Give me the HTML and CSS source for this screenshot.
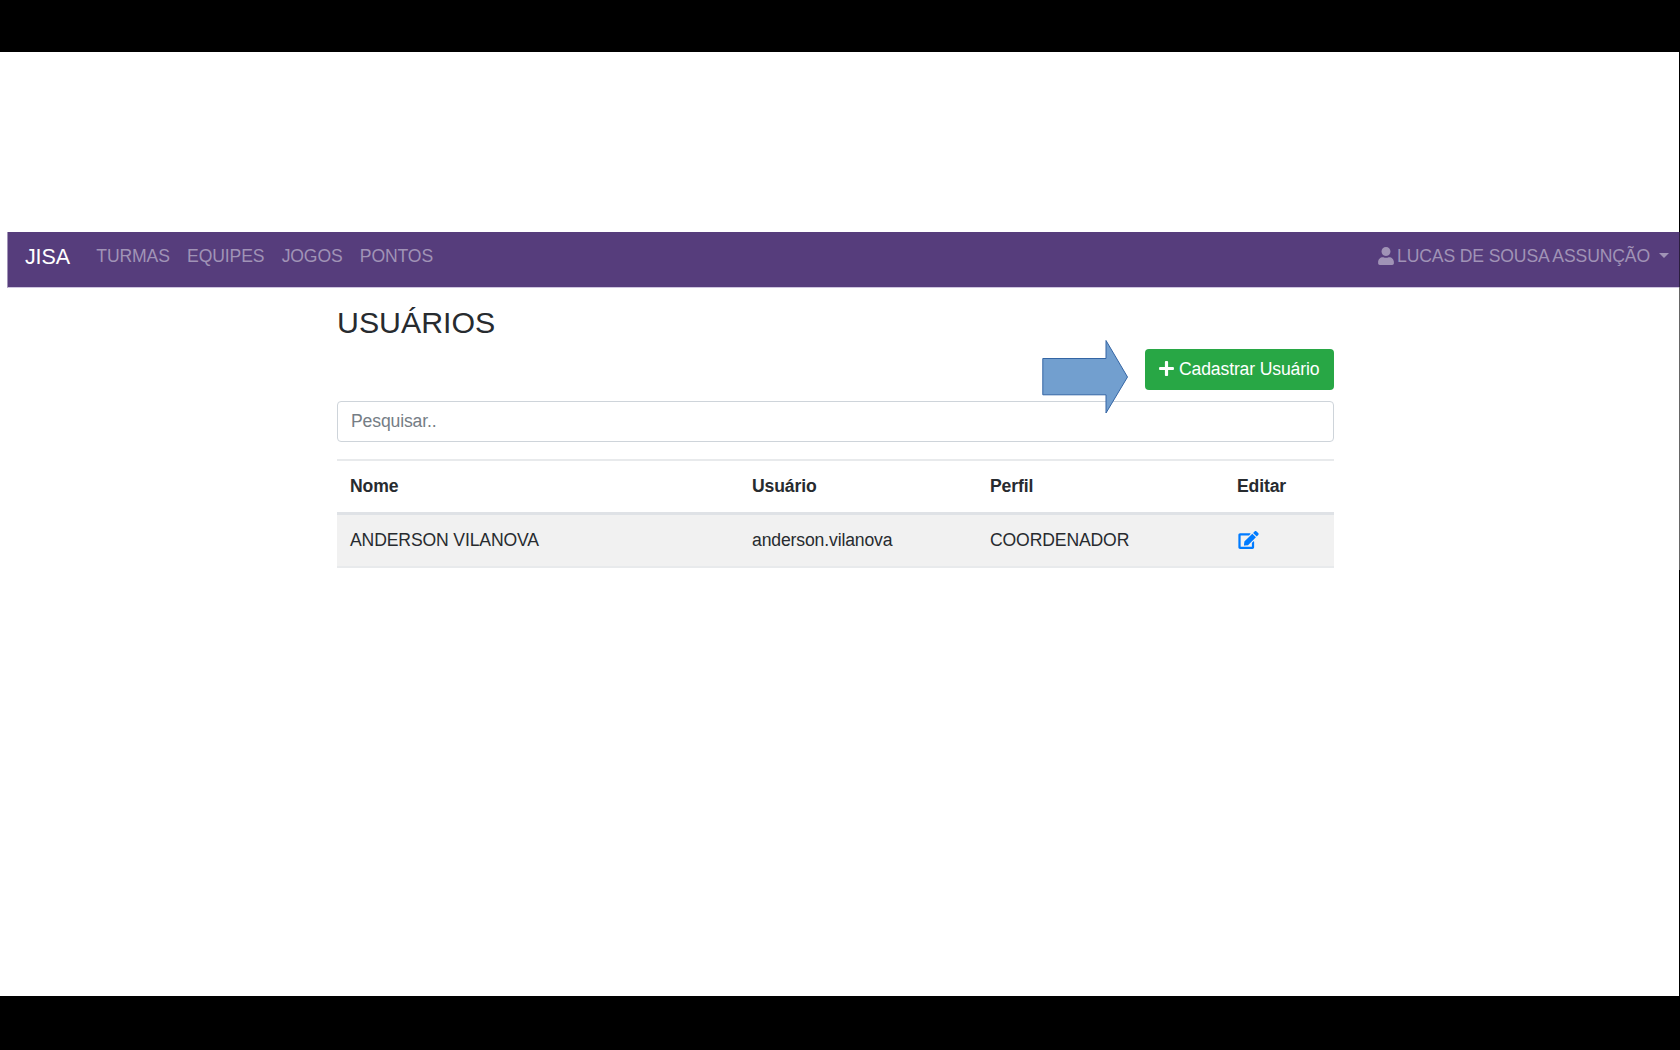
FILE: index.html
```html
<!DOCTYPE html>
<html lang="pt-BR">
<head>
<meta charset="utf-8">
<title>JISA - Usuários</title>
<link rel="stylesheet" href="styles.css">
</head>
<body>
<div class="slide">
  <nav class="navbar">
    <a class="brand">JISA</a>
    <ul class="links">
      <li>TURMAS</li>
      <li>EQUIPES</li>
      <li>JOGOS</li>
      <li>PONTOS</li>
    </ul>
    <div class="account">
      <svg class="user-icon" viewBox="0 0 448 512"><path fill="currentColor" d="M224 256c70.700 0 128-57.300 128-128S294.700 0 224 0 96 57.300 96 128s57.300 128 128 128zm89.600 32h-16.700c-22.200 10.200-46.900 16-72.900 16s-50.600-5.800-72.900-16h-16.700C60.200 288 0 348.200 0 422.400V464c0 26.500 21.500 48 48 48h352c26.500 0 48-21.500 48-48v-41.600c0-74.200-60.200-134.400-134.400-134.400z"/></svg>
      <span>LUCAS DE SOUSA ASSUNÇÃO</span>
      <i class="caret"></i>
    </div>
  </nav>
  <main class="container">
    <h1>USUÁRIOS</h1>
    <div class="actions">
      <svg class="arrow" viewBox="0 0 88 76"><path d="M.8 19.500H64V1.500L85.500 38 64 74V55.800H.8z" fill="#729fcf" stroke="#3465a4"/></svg>
      <button class="btn"><svg class="plus" viewBox="0 0 448 512"><path fill="currentColor" d="M416 208H272V64c0-17.670-14.330-32-32-32h-32c-17.670 0-32 14.330-32 32v144H32c-17.670 0-32 14.330-32 32v32c0 17.670 14.330 32 32 32h144v144c0 17.670 14.330 32 32 32h32c17.670 0 32-14.330 32-32V304h144c17.670 0 32-14.330 32-32v-32c0-17.670-14.330-32-32-32z"/></svg><span>Cadastrar Usuário</span></button>
    </div>
    <input class="search" type="text" placeholder="Pesquisar..">
    <table class="users">
      <colgroup><col class="c-name"><col class="c-user"><col class="c-role"><col></colgroup>
      <thead><tr><th>Nome</th><th>Usuário</th><th>Perfil</th><th>Editar</th></tr></thead>
      <tbody><tr><td>ANDERSON VILANOVA</td><td>anderson.vilanova</td><td>COORDENADOR</td><td><svg class="edit" viewBox="0 0 576 512"><path fill="currentColor" d="M402.600 83.200l90.200 90.200c3.800 3.800 3.800 10 0 13.800L274.400 405.600l-92.800 10.300c-12.400 1.400-22.900-9.100-21.500-21.500l10.300-92.800L388.800 83.200c3.800-3.800 10-3.800 13.800 0zm162-22.900l-48.800-48.800c-15.200-15.200-39.900-15.200-55.200 0l-35.400 35.400c-3.800 3.800-3.800 10 0 13.800l90.200 90.200c3.800 3.800 10 3.800 13.800 0l35.400-35.400c15.200-15.300 15.200-40 0-55.200zM384 346.200V448H64V128h229.800c3.200 0 6.200-1.300 8.500-3.500l40-40c7.600-7.600 2.200-20.500-8.500-20.500H48C21.500 64 0 85.500 0 112v352c0 26.500 21.500 48 48 48h352c26.500 0 48-21.500 48-48V306.200c0-10.700-12.900-16-20.500-8.500l-40 40c-2.200 2.300-3.500 5.300-3.500 8.500z"/></svg></td></tr></tbody>
    </table>
  </main>
  <div class="edge"></div>
</div>
</body>
</html>
```
FILE: styles.css
```css
* { box-sizing: border-box; }

body {
  margin: 0;
  height: 1050px;
  padding: 52px 0 54px;
  background: #000;
  color: #272b2f;
  font: 17.6px/26px "Liberation Sans", Arial, sans-serif;
  letter-spacing: -0.14px;
  overflow: hidden;
}

.slide {
  position: relative;
  height: 944px;
  padding-top: 180px;
  background: #fff;
}

.navbar {
  display: flex;
  align-items: flex-start;
  height: 56px;
  margin-left: 7px;
  padding: 11px 10px 0 17px;
  background: #563d7c;
  border-bottom: 1px solid #cfc5e0;
  border-left: 1px solid #a295b8;
  color: #a093b6;
}

.brand {
  color: #fff;
  font-size: 21.5px;
  line-height: 28px;
}

.links {
  display: flex;
  gap: 17.3px;
  margin: 0 0 0 26.5px;
  padding: 0;
  list-style: none;
}

.account {
  display: flex;
  margin-left: auto;
}

.user-icon {
  width: 16px;
  height: 18px;
  margin: 4px 3px 0 0;
}

.caret {
  margin: 10px 1px 0 9px;
  width: 10px;
  height: 5px;
  background: currentColor;
  clip-path: polygon(0 0, 100% 0, 50% 100%);
}

.container {
  width: 997px;
  margin-left: 337px;
  padding-top: 18px;
}

h1 {
  margin: 0;
  font-size: 30.3px;
  letter-spacing: 0;
  font-weight: 400;
  line-height: 34px;
}

.actions {
  display: flex;
  justify-content: flex-end;
  position: relative;
  margin: 9px 0 11px;
}

.btn {
  display: flex;
  align-items: center;
  width: 189px;
  height: 41px;
  padding: 0 0 2px 14px;
  border: 0;
  border-radius: 4px;
  background: #28a745;
  color: #fff;
  font: inherit;
  letter-spacing: inherit;
  white-space: nowrap;
}

.plus {
  width: 15px;
  height: 17px;
  margin-right: 5px;
}

.arrow {
  position: absolute;
  left: 705px;
  top: -10px;
  width: 88px;
  height: 76px;
}

.search {
  display: block;
  width: 100%;
  height: 41px;
  padding: 0 13px 1px;
  border: 1px solid #ced4da;
  border-radius: 4px;
  background: #fff;
  font: inherit;
  letter-spacing: inherit;
}

.search::placeholder { color: #757d85; opacity: 1; }

.users {
  width: 100%;
  margin-top: 17px;
  border-collapse: separate;
  border-spacing: 0;
  border-bottom: 2px solid #e8eaec;
  table-layout: fixed;
}

.c-name { width: 402px; }
.c-user { width: 238px; }
.c-role { width: 247px; }

.users th,
.users td {
  height: 51px;
  padding: 0 13px;
  text-align: left;
}

.users th {
  height: 56px;
  padding-bottom: 2px;
  border-top: 2px solid #e8eaec;
  border-bottom: 3px solid #dfe2e6;
}

.users td {
  padding-bottom: 1px;
  background: #f1f1f1;
}

.edit {
  display: block;
  width: 21px;
  height: 18px;
  margin-left: 1px;
  color: #007bff;
}

.edge {
  position: absolute;
  top: 0;
  right: 0;
  width: 1px;
  height: 100%;
  background: linear-gradient(#000 180px, #2b1e3e 180px 235px, #666 235px 518px, #000 518px);
}
```
